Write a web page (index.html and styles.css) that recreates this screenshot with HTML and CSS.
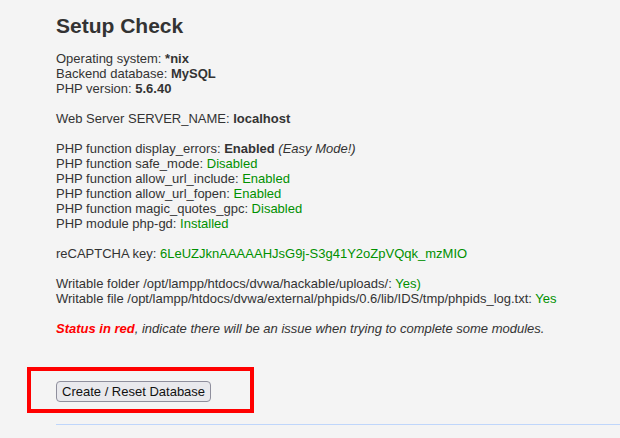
FILE: index.html
```html
<!DOCTYPE html>
<html>
<head>
<meta charset="utf-8">
<title>Setup Check</title>
<link rel="stylesheet" href="styles.css">
</head>
<body>
  <div class="main">
    <h1>Setup Check</h1>

    <p>
      Operating system: <b>*nix</b><br>
      Backend database: <b>MySQL</b><br>
      PHP version: <b>5.6.40</b>
    </p>

    <p>Web Server SERVER_NAME: <b>localhost</b></p>

    <p>
      PHP function display_errors: <b>Enabled</b> <i>(Easy Mode!)</i><br>
      PHP function safe_mode: <span class="ok">Disabled</span><br>
      PHP function allow_url_include: <span class="ok">Enabled</span><br>
      PHP function allow_url_fopen: <span class="ok">Enabled</span><br>
      PHP function magic_quotes_gpc: <span class="ok">Disabled</span><br>
      PHP module php-gd: <span class="ok">Installed</span>
    </p>

    <p>reCAPTCHA key: <span class="ok">6LeUZJknAAAAAHJsG9j-S3g41Y2oZpVQqk_mzMIO</span></p>

    <p>
      Writable folder /opt/lampp/htdocs/dvwa/hackable/uploads/: <span class="ok">Yes)</span><br>
      Writable file /opt/lampp/htdocs/dvwa/external/phpids/0.6/lib/IDS/tmp/phpids_log.txt: <span class="ok">Yes</span>
    </p>

    <p class="note"><span class="bad">Status in red</span>, indicate there will be an issue when trying to complete some modules.</p>

    <div class="mark">
      <button class="btn">Create / Reset Database</button>
    </div>

    <div class="rule"></div>
  </div>
</body>
</html>
```

FILE: styles.css
```css
html {
  background-color: #f4f4f4;
}

body {
  margin: 0;
  font-family: "Liberation Sans", Arial, sans-serif;
  font-size: 13px;
  line-height: 15px;
  color: #333;
}

.main {
  padding-left: 56px;
}

h1 {
  font-size: 21px;
  line-height: 24px;
  margin: 14px 0 13px 0;
  color: #333;
}

p {
  margin: 0 0 15px 0;
}

.ok {
  color: #009000;
}

.note {
  font-style: italic;
}

.bad {
  color: #ff0000;
  font-weight: bold;
}

/* red marker drawn round the button */
.mark {
  box-sizing: border-box;
  width: 227px;
  margin: 31px 0 0 -29px;
  padding: 10px 0 7px 25px;
  border: 4px solid #ff0000;
}

.btn {
  font-family: "Liberation Sans", Arial, sans-serif;
  font-size: 13px;
  line-height: 15px;
  color: #111;
  background-color: #e9e9ed;
  border: 1px solid #8f8f9d;
  border-radius: 4px;
  padding: 2px 5px;
  margin: 0;
  display: block;
}

.rule {
  margin-top: 11px;
  border-top: 1px solid #bfd6fb;
}
```
